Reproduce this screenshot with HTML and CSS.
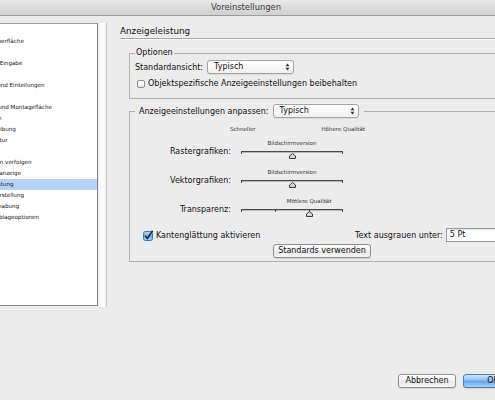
FILE: index.html
```html
<!DOCTYPE html>
<html lang="de">
<head>
<meta charset="utf-8">
<title>Voreinstellungen</title>
<link rel="stylesheet" href="styles.css">
</head>
<body>
<div class="window">
  <div class="titlebar">Voreinstellungen</div>
  <div class="content">
    <div class="sidebar">
      <ul class="list">
        <li>Allgemein</li>
        <li>Benutzeroberfläche</li>
        <li>Eingabe</li>
        <li>Erweiterte Eingabe</li>
        <li>Satz</li>
        <li>Einheiten und Einteilungen</li>
        <li>Raster</li>
        <li>Hilfslinien und Montagefläche</li>
        <li>Wörterbuch</li>
        <li>Rechtschreibung</li>
        <li>Autokorrektur</li>
        <li>Notizen</li>
        <li>Änderungen verfolgen</li>
        <li>Textmodusanzeige</li>
        <li class="sel">Anzeigeleistung</li>
        <li>Schwarzdarstellung</li>
        <li>Dateihandhabung</li>
        <li>Zwischenablageoptionen</li>
      </ul>
      <div class="scroll"></div>
    </div>
    <div class="panel">
      <h1 class="heading">Anzeigeleistung</h1>
      <fieldset class="group g1">
        <legend class="legend1">Optionen</legend>
        <div class="row-view">
          <span>Standardansicht:</span>
          <div class="popup">
            <span>Typisch</span>
            <svg class="arrows" width="5" height="8" viewBox="0 0 5 8"><polygon points="0.5,3.2 2.5,0.6 4.5,3.2" fill="#333"/><polygon points="0.5,4.8 2.5,7.4 4.5,4.8" fill="#333"/></svg>
          </div>
        </div>
        <div class="row-check">
          <span class="checkbox"></span>
          <span>Objektspezifische Anzeigeeinstellungen beibehalten</span>
        </div>
      </fieldset>
      <fieldset class="group g2">
        <legend class="legend2">
          <span>Anzeigeeinstellungen anpassen:</span>
          <div class="popup">
            <span>Typisch</span>
            <svg class="arrows" width="5" height="8" viewBox="0 0 5 8"><polygon points="0.5,3.2 2.5,0.6 4.5,3.2" fill="#333"/><polygon points="0.5,4.8 2.5,7.4 4.5,4.8" fill="#333"/></svg>
          </div>
        </legend>
        <div class="scale">
          <span></span>
          <div class="scale-labels"><span>Schneller</span><span>Höhere Qualität</span></div>
        </div>
        <div class="srow">
          <span class="slabel">Rastergrafiken:</span>
          <div class="slider">
            <div class="cap-line"><span class="cap" style="left:50%">Bildschirmversion</span></div>
            <div class="track">
              <i class="tick" style="left:0"></i>
              <i class="tick" style="left:calc(100% - 1px)"></i>
              <svg class="thumb" style="left:50%" width="7" height="6" viewBox="0 0 7 6"><polygon points="3.5,0.5 6.5,3 6.5,5.5 0.5,5.5 0.5,3" fill="#d6d6d6" stroke="#3a3a3a" stroke-width="1"/></svg>
            </div>
          </div>
        </div>
        <div class="srow">
          <span class="slabel">Vektorgrafiken:</span>
          <div class="slider">
            <div class="cap-line"><span class="cap" style="left:50%">Bildschirmversion</span></div>
            <div class="track">
              <i class="tick" style="left:0"></i>
              <i class="tick" style="left:calc(100% - 1px)"></i>
              <svg class="thumb" style="left:50%" width="7" height="6" viewBox="0 0 7 6"><polygon points="3.5,0.5 6.5,3 6.5,5.5 0.5,5.5 0.5,3" fill="#d6d6d6" stroke="#3a3a3a" stroke-width="1"/></svg>
            </div>
          </div>
        </div>
        <div class="srow">
          <span class="slabel">Transparenz:</span>
          <div class="slider">
            <div class="cap-line"><span class="cap" style="left:66.7%">Mittlere Qualität</span></div>
            <div class="track">
              <i class="tick" style="left:0"></i>
              <i class="tick" style="left:33.3%"></i>
              <i class="tick" style="left:66.7%"></i>
              <i class="tick" style="left:calc(100% - 1px)"></i>
              <svg class="thumb" style="left:66.7%" width="7" height="6" viewBox="0 0 7 6"><polygon points="3.5,0.5 6.5,3 6.5,5.5 0.5,5.5 0.5,3" fill="#d6d6d6" stroke="#3a3a3a" stroke-width="1"/></svg>
            </div>
          </div>
        </div>
        <div class="row-aa">
          <div class="aa-left">
            <svg class="checked" width="11" height="11" viewBox="0 0 11 11">
              <defs><linearGradient id="cbg" x1="0" y1="0" x2="0" y2="1"><stop offset="0" stop-color="#c6e0fb"/><stop offset="0.5" stop-color="#6aa8ea"/><stop offset="1" stop-color="#a8d3fb"/></linearGradient></defs>
              <rect x="0.5" y="1.5" width="9" height="9" rx="2" fill="url(#cbg)" stroke="#4d6f9f"/>
              <path d="M2.3 5.8 L4.4 8.4 L9.6 0.8" fill="none" stroke="#1c2a3a" stroke-width="1.6"/>
            </svg>
            <span>Kantenglättung aktivieren</span>
          </div>
          <span>Text ausgrauen unter:</span>
          <div class="field">5 Pt</div>
        </div>
        <div class="row-btn"><button class="btn std">Standards verwenden</button></div>
      </fieldset>
    </div>
  </div>
  <div class="footer">
    <button class="btn cancel">Abbrechen</button>
    <button class="btn ok">OK</button>
  </div>
</div>
</body>
</html>
```
FILE: styles.css
```css
html, body {
  margin: 0;
  padding: 0;
  width: 495px;
  height: 400px;
  overflow: hidden;
  background: #ececec;
}

body {
  font-family: "DejaVu Sans", "Liberation Sans", sans-serif;
  font-size: 8px;
  color: #111;
}

.window {
  width: 576px;
  height: 400px;
  margin-left: -42px;
  display: flex;
  flex-direction: column;
  background: #ececec;
}

.titlebar {
  height: 15px;
  line-height: 14px;
  border-bottom: 1px solid #9c9c9c;
  background: linear-gradient(#e9e9e9, #cfcfcf);
  text-align: center;
  font-size: 8.4px;
  color: #3a3a3a;
}

.content {
  display: flex;
  padding-top: 7px;
}

.sidebar {
  display: flex;
  align-items: flex-start;
}

.list {
  list-style: none;
  margin: 0;
  padding: 1px 0 0;
  width: 139px;
  height: 280px;
  background: #fff;
  border-top: 1px solid #9a9a9a;
  border-right: 1px solid #858585;
  border-bottom: 1px solid #858585;
}

.list li {
  height: 11px;
  line-height: 11px;
  font-size: 5.6px;
  padding-left: 11px;
  white-space: nowrap;
  color: #111;
}

.list li.sel {
  background: #b6d3f6;
}

.scroll {
  width: 7px;
  height: 284px;
  margin-left: 1px;
  background: linear-gradient(to right, #f4f4f4, #ffffff 40%, #f2f2f2);
  border-right: 1px solid #c4c4c4;
}

.panel {
  flex: 1;
  margin-left: 13px;
  padding-top: 1px;
  padding-right: 19px;
}

.heading {
  margin: 0;
  font-size: 8.8px;
  font-weight: normal;
  line-height: 14px;
  height: 14px;
  border-bottom: 1px solid #a9a9a9;
  box-shadow: 0 1px 0 #f9f9f9;
}

.group {
  margin: 0 0 0 9px;
  border: 1px solid #b2b2b2;
  min-inline-size: 0;
}

.g1 {
  margin-top: 9px;
  padding: 0 0 9px 5px;
}

.legend1 {
  padding: 0 1px;
  line-height: 10px;
  height: 10px;
}

.row-view {
  display: flex;
  align-items: center;
  gap: 4px;
  height: 14px;
  margin-top: 2px;
}

.popup {
  display: flex;
  align-items: center;
  justify-content: space-between;
  box-sizing: border-box;
  width: 87px;
  height: 14px;
  padding: 0 3px 0 6px;
  border: 1px solid #a3a3a3;
  border-radius: 3px;
  background: linear-gradient(#ffffff, #f0f0f0);
  box-shadow: 0 1px 1px rgba(0, 0, 0, 0.08);
  line-height: 12px;
}

.arrows {
  display: block;
}

.row-check {
  display: flex;
  align-items: center;
  gap: 3px;
  height: 11px;
  margin-top: 4px;
}

.checkbox {
  width: 8px;
  height: 8px;
  margin-left: 2px;
  box-sizing: border-box;
  border: 1px solid #8e8e8e;
  border-radius: 2px;
  background: linear-gradient(#ffffff, #e9e9e9);
}

.g2 {
  margin-top: 5px;
  padding: 0 0 3px 5px;
}

.legend2 {
  display: flex;
  align-items: center;
  gap: 4px;
  height: 14px;
  padding: 0 5px 0 4px;
}

.legend2 .popup {
  width: 86px;
}

.scale {
  display: grid;
  grid-template-columns: 96px 102px;
  column-gap: 10px;
  margin-top: 8px;
  height: 7px;
}

.scale-labels {
  display: flex;
  justify-content: space-between;
  margin: 0 -22px 0 -11px;
  font-size: 5.5px;
  line-height: 7px;
  color: #333;
}

.srow {
  display: grid;
  grid-template-columns: 96px 102px;
  column-gap: 10px;
  height: 29px;
}

.scale + .srow {
  margin-top: 7px;
}

.slabel {
  text-align: right;
  padding-top: 7px;
  line-height: 10px;
}

.slider {
  position: relative;
}

.cap-line {
  position: relative;
  height: 7px;
}

.cap {
  position: absolute;
  top: 0;
  transform: translateX(-50%);
  white-space: nowrap;
  font-size: 5.5px;
  line-height: 7px;
  color: #333;
}

.track {
  position: relative;
  height: 1px;
  margin-top: 4px;
  background: #4a4a4a;
  box-shadow: 0 1px 0 #b9b9b9;
}

.tick {
  position: absolute;
  top: 0;
  width: 1px;
  height: 3px;
  background: #4a4a4a;
}

.thumb {
  position: absolute;
  top: 2px;
  margin-left: -3.5px;
  display: block;
}

.row-aa {
  display: flex;
  align-items: center;
  height: 14px;
  margin-top: 1px;
}

.aa-left {
  display: flex;
  align-items: center;
  gap: 2px;
  width: 212px;
  padding-left: 8px;
}

.checked {
  display: block;
}

.field {
  box-sizing: border-box;
  width: 62px;
  height: 14px;
  margin-left: 3px;
  padding-left: 3px;
  line-height: 12px;
  background: #fff;
  border: 1px solid #9b9b9b;
  box-shadow: inset 0 1px 1px rgba(0, 0, 0, 0.12);
}

.row-btn {
  margin-top: 2px;
  text-align: center;
  height: 14px;
}

.btn {
  box-sizing: border-box;
  height: 14px;
  padding: 0;
  font-family: "DejaVu Sans", "Liberation Sans", sans-serif;
  font-size: 8px;
  line-height: 12px;
  color: #111;
  border: 1px solid #8f8f8f;
  border-radius: 3px;
  background: linear-gradient(#ffffff, #f1f1f1 50%, #e6e6e6 51%, #f7f7f7);
  box-shadow: 0 1px 1px rgba(0, 0, 0, 0.12);
}

.std {
  width: 98px;
  margin-right: 5px;
}

.footer {
  margin-top: auto;
  display: flex;
  justify-content: flex-end;
  gap: 7px;
  padding: 0 11px 12px 0;
}

.cancel {
  width: 58px;
}

.ok {
  width: 60px;
  border-color: #5479ad;
  background: linear-gradient(#cde4fa, #8cbef0 45%, #5ea3ea 52%, #a6d5fb);
}
```
